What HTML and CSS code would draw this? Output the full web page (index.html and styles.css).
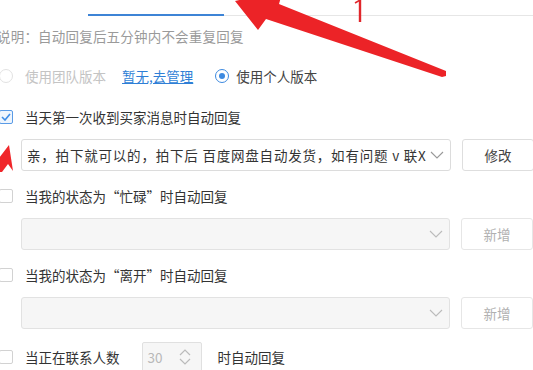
FILE: index.html
```html
<!DOCTYPE html>
<html lang="zh">
<head>
<meta charset="utf-8">
<link rel="stylesheet" href="styles.css">
</head>
<body>
<div class="page">
  <div class="tabs">
    <div class="tab-gap"></div>
    <div class="tab active"></div>
    <div class="tab-rest"></div>
  </div>

  <div class="desc">说明：自动回复后五分钟内不会重复回复</div>

  <div class="radio-row">
    <span class="radio disabled"></span>
    <span class="radio-label disabled">使用团队版本</span>
    <a class="link">暂无,去管理</a>
    <span class="radio checked"></span>
    <span class="radio-label">使用个人版本</span>
  </div>

  <div class="section first">
    <div class="check-row">
      <span class="checkbox checked">
        <svg width="10" height="8" viewBox="0 0 10 8"><polyline points="1,4 4,7 9,1" fill="none" stroke="#3c8ce6" stroke-width="1.6"/></svg>
      </span>
      <span class="label">当天第一次收到买家消息时自动回复</span>
    </div>
    <div class="select-row">
      <div class="select">
        <span class="select-text">亲，拍下就可以的，拍下后 百度网盘自动发货，如有问题 v 联X</span>
        <svg class="chev" width="14" height="8" viewBox="0 0 14 8"><polyline points="1,1 7,7 13,1" fill="none" stroke="#999" stroke-width="1.1"/></svg>
      </div>
      <div class="btn">修改</div>
    </div>
  </div>

  <div class="section">
    <div class="check-row">
      <span class="checkbox"></span>
      <span class="label">当我的状态为“忙碌”时自动回复</span>
    </div>
    <div class="select-row">
      <div class="select disabled">
        <span class="select-text"></span>
        <svg class="chev" width="14" height="8" viewBox="0 0 14 8"><polyline points="1,1 7,7 13,1" fill="none" stroke="#bbb" stroke-width="1.1"/></svg>
      </div>
      <div class="btn disabled">新增</div>
    </div>
  </div>

  <div class="section">
    <div class="check-row">
      <span class="checkbox"></span>
      <span class="label">当我的状态为“离开”时自动回复</span>
    </div>
    <div class="select-row">
      <div class="select disabled">
        <span class="select-text"></span>
        <svg class="chev" width="14" height="8" viewBox="0 0 14 8"><polyline points="1,1 7,7 13,1" fill="none" stroke="#bbb" stroke-width="1.1"/></svg>
      </div>
      <div class="btn disabled">新增</div>
    </div>
  </div>

  <div class="last-row">
    <span class="checkbox"></span>
    <span class="label">当正在联系人数</span>
    <div class="number">
      <span class="num-val">30</span>
      <svg width="14" height="18" viewBox="0 0 14 18"><polyline points="2,7 7,2 12,7" fill="none" stroke="#bbb" stroke-width="1.2"/><polyline points="2,11 7,16 12,11" fill="none" stroke="#bbb" stroke-width="1.2"/></svg>
    </div>
    <span class="label">时自动回复</span>
  </div>

  <svg class="marks" width="533" height="370" viewBox="0 0 533 370">
    <polygon points="235,1 283,-10 279,4 446,71 446,76 442,77 266,19 258,30" fill="#ec2327"/>
    <path d="M360,0 L360,22" stroke="#e0262b" stroke-width="2.4"/>
    <path d="M355,3 L360,0" stroke="#e0262b" stroke-width="1.5"/>
    <polygon points="9,145 13,171 8,164 2,172 -1,172 -1,158" fill="#f0262a"/>
  </svg>
</div>
</body>
</html>
```

FILE: styles.css
```css
* { box-sizing: border-box; }
html, body { margin: 0; padding: 0; background: #fff; }
body {
  width: 533px;
  height: 370px;
  overflow: hidden;
  font-family: "Noto Sans CJK SC", "Noto Sans", sans-serif;
  font-size: 13.5px;
  color: #333;
}
.page {
  position: relative;
  width: 533px;
  height: 370px;
}
.tabs {
  display: flex;
  height: 16px;
}
.tab-gap { width: 88px; }
.tab.active {
  width: 136px;
  border-bottom: 2px solid #3d84d6;
}
.tab-rest {
  flex: 1;
  border-bottom: 1px solid #e6e6e6;
}
.desc {
  margin-top: 12px;
  margin-left: -3px;
  height: 16px;
  line-height: 16px;
  color: #9a9a9a;
  letter-spacing: 0.2px;
}
.radio-row {
  margin-top: 22px;
  height: 20px;
  display: flex;
  align-items: center;
  margin-left: -1px;
}
.radio {
  width: 14px;
  height: 14px;
  border-radius: 50%;
  border: 1px solid #d0d0d0;
  background: #fff;
  flex: none;
  position: relative;
}
.radio.disabled { border-color: #e2e2e2; }
.radio.checked {
  border-color: #3d8ae0;
  margin-left: 22px;
}
.radio.checked::after {
  content: "";
  position: absolute;
  left: 3px;
  top: 3px;
  width: 6px;
  height: 6px;
  border-radius: 50%;
  background: #3d8ae0;
}
.radio-label { margin-left: 12px; color: #444; }
.radio.checked + .radio-label { margin-left: 7px; }
.radio-label.disabled { color: #c4c4c4; }
.link {
  margin-left: 16px;
  color: #2f7fd6;
  text-decoration: underline;
}
.section {
  margin-top: 15px;
  display: flex;
  flex-direction: column;
  gap: 12px;
}
.section.first { margin-top: 21px; }
.check-row, .last-row {
  height: 20px;
  display: flex;
  align-items: center;
  margin-left: -1px;
}
.checkbox {
  width: 14px;
  height: 14px;
  border: 1px solid #d2d2d2;
  border-radius: 2px;
  background: #fff;
  flex: none;
  display: flex;
  align-items: center;
  justify-content: center;
}
.checkbox.checked {
  border-color: #5a9be6;
  background: #eef5fd;
}
.label { margin-left: 12px; color: #333; }
.select-row {
  display: flex;
  gap: 11px;
  padding-left: 21px;
  height: 32px;
}
.select {
  width: 430px;
  height: 32px;
  border: 1px solid #dcdcdc;
  border-radius: 3px;
  background: #fff;
  display: flex;
  align-items: center;
  padding: 0 6px 0 5px;
}
.select.disabled { background: #f6f6f6; border-color: #e2e2e2; }
.select-text {
  flex: 1;
  white-space: nowrap;
  overflow: hidden;
  color: #333;
  letter-spacing: 0.8px;
}
.chev { flex: none; margin-left: 4px; }
.btn {
  width: 72px;
  height: 32px;
  border: 1px solid #dedede;
  border-radius: 3px;
  background: #fff;
  display: flex;
  align-items: center;
  justify-content: center;
  color: #444;
  flex: none;
}
.btn.disabled { color: #b0b0b0; border-color: #e6e6e6; }
.last-row {
  margin-top: 13px;
  height: 30px;
}
.number {
  margin-left: 22px;
  width: 60px;
  height: 30px;
  border: 1px solid #e0e0e0;
  border-radius: 2px;
  background: #f6f6f6;
  display: flex;
  align-items: center;
  justify-content: space-between;
  padding: 0 9px 0 5px;
  flex: none;
}
.num-val { color: #b8b8b8; }
.number + .label { margin-left: 16px; }
.marks {
  position: absolute;
  left: 0;
  top: 0;
  pointer-events: none;
  overflow: visible;
}
```
